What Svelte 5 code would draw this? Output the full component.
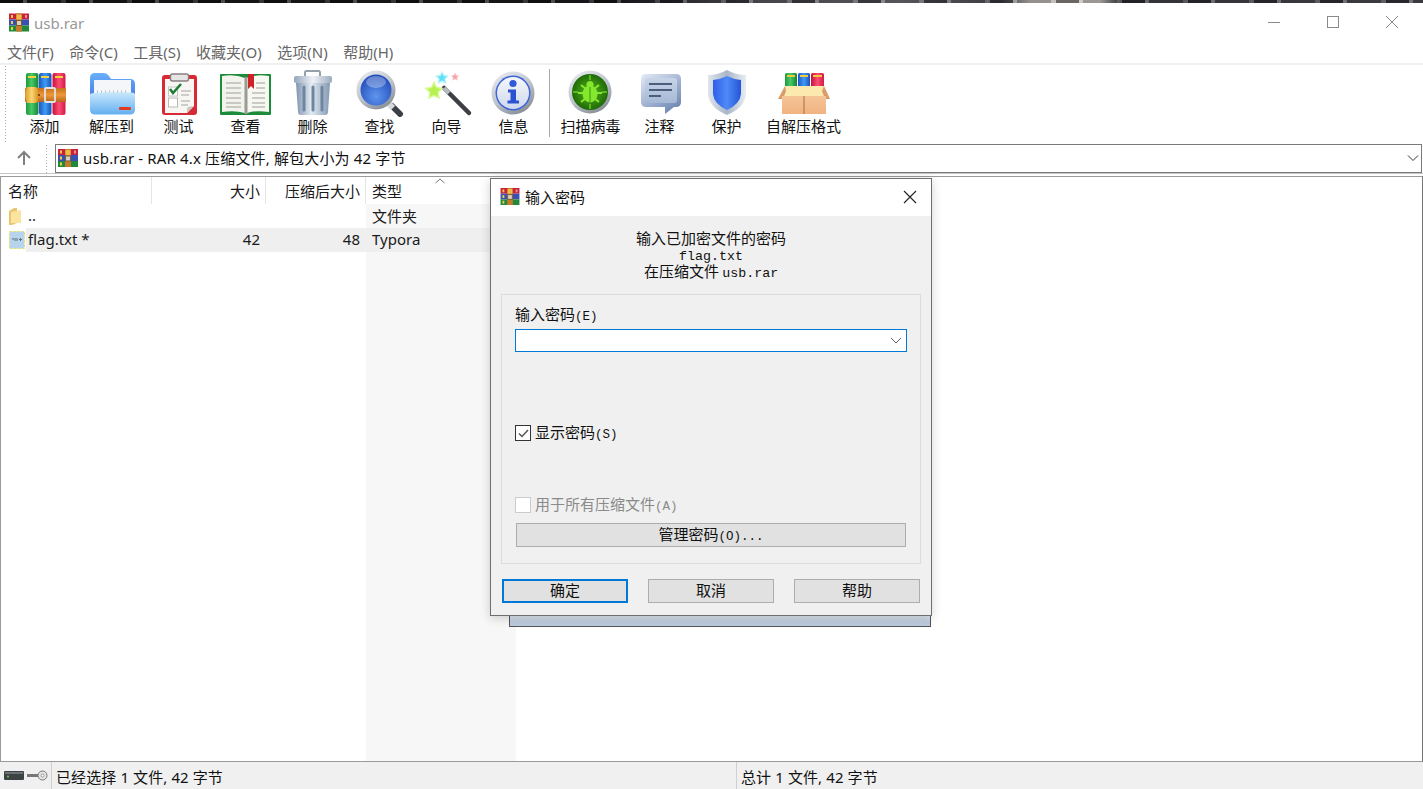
<script>
  const tools = [
    { label: '添加', width: 67, icon: 'add' },
    { label: '解压到', width: 67, icon: 'extract' },
    { label: '测试', width: 67, icon: 'test' },
    { label: '查看', width: 67, icon: 'view' },
    { label: '删除', width: 67, icon: 'delete' },
    { label: '查找', width: 67, icon: 'find' },
    { label: '向导', width: 67, icon: 'wizard' },
    { label: '信息', width: 67, icon: 'info' },
    { sep: true },
    { label: '扫描病毒', width: 71, icon: 'scan' },
    { label: '注释', width: 67, icon: 'comment' },
    { label: '保护', width: 67, icon: 'protect' },
    { label: '自解压格式', width: 87, icon: 'sfx' }
  ];

  const menus = ['文件(F)', '命令(C)', '工具(S)', '收藏夹(O)', '选项(N)', '帮助(H)'];

  const star = (cx, cy, r) => {
    const pts = [];
    for (let i = 0; i < 10; i++) {
      const a = -Math.PI / 2 + (i * Math.PI) / 5;
      const d = i % 2 ? r * 0.5 : r;
      pts.push(`${(cx + d * Math.cos(a)).toFixed(1)},${(cy + d * Math.sin(a)).toFixed(1)}`);
    }
    return pts.join(' ');
  };
</script>

{#snippet rar(w, h)}
  <svg class="rar" width={w} height={h} viewBox="0 0 20 18">
    <rect y="0" width="20" height="6" fill="#c8213c" />
    <rect y="6" width="20" height="6" fill="#3a4fb5" />
    <rect y="12" width="20" height="6" fill="#21893a" />
    <rect x="2" y="1.5" width="2" height="3" fill="#f3c93f" />
    <rect x="2" y="7.5" width="2" height="3" fill="#e9d24a" />
    <rect x="2" y="13.5" width="2" height="3" fill="#e9d24a" />
    <rect x="16" y="1.5" width="2" height="3" fill="#f08a9a" />
    <rect x="7" y="0" width="6" height="18" fill="#c47b2c" />
    <rect x="7.5" y="1" width="5" height="5" rx="1" fill="#f0b94a" />
    <rect x="7.5" y="7" width="5" height="5" fill="#d9d0c0" stroke="#7b5a2a" stroke-width="1" />
  </svg>
{/snippet}

{#snippet toolIcon(name)}
  <svg width="56" height="48" viewBox="0 0 56 48">
    {#if name === 'add'}
      <rect x="9" y="4" width="12.5" height="42" rx="2" fill="url(#bookG)" />
      <rect x="22" y="4" width="12.5" height="42" rx="2" fill="url(#bookB)" />
      <rect x="35.5" y="4" width="13" height="42" rx="2" fill="url(#bookR)" />
      <rect x="11" y="7" width="8" height="2" fill="#f4d23c" />
      <rect x="24" y="7" width="8" height="2" fill="#f4d23c" />
      <rect x="38" y="7" width="8" height="2" fill="#f4d23c" />
      <rect x="8" y="19" width="41" height="14" rx="1" fill="url(#belt)" />
      <path d="M10 18h8q3 0 3 3v10q0 3-3 3h-8q-3-8 0-16z" fill="url(#gold)" />
      <circle cx="22" cy="26" r="1" fill="#5b3210" />
      <rect x="28" y="19" width="10" height="14" rx="1" fill="none" stroke="#dfe3e6" stroke-width="1.800" />
    {:else if name === 'extract'}
      <path d="M6 9q0-5 5-5h9q3 0 5 3l2 3h19q5 0 5 5v26H6z" fill="url(#folderBack)" />
      <rect x="10" y="11" width="37" height="16" fill="#f4f6f9" />
      <path d="M13 23h31" stroke="#b5bdc8" stroke-width="3" stroke-dasharray="1 3" />
      <path d="M6 26q0-2 4-2 6 0 10-.5 6-.5 10 0h17q4 0 4 2v15q0 5-5 5H11q-5 0-5-5z" fill="url(#folderFront)" />
      <rect x="35" y="38" width="12" height="3" rx="1" fill="#e23b24" />
    {:else if name === 'test'}
      <rect x="11" y="6" width="35" height="40" rx="3" fill="#d72a35" />
      <path d="M14 10h29v27l-7 7H14z" fill="#f7f6f2" />
      <path d="M43 37l-7 7q0-6 1-6z" fill="#c9c5bc" />
      <rect x="19.5" y="5" width="18" height="7" rx="2" fill="#e5e5e5" stroke="#8a7f80" stroke-width="1.4" />
      <rect x="17.5" y="18" width="9" height="9" fill="#fff" stroke="#c4c4c4" />
      <rect x="17.5" y="29" width="9" height="9" fill="#fff" stroke="#b9b9b9" />
      <path d="M19 20l3 4 8-9" fill="none" stroke="#1f7d34" stroke-width="2.6" />
      <path d="M30 22h10M30 26h8M30 32h9M30 36h7" stroke="#a3a3a3" stroke-width="1.2" />
    {:else if name === 'view'}
      <rect x="2" y="5" width="51" height="41" rx="1" fill="#1c8c3a" />
      <path d="M4 7q13-2 23 2v35Q17 41 4 43z" fill="#f3f3ee" />
      <path d="M51 7q-13-2-22 2v35q9-3 22-1z" fill="#f8f8f3" />
      <rect x="26.5" y="8" width="3" height="37" fill="#9b9b94" />
      <path d="M8 14h15M8 19h15M8 24h15M8 29h15M8 34h15M8 38h15M34 24h13M34 29h13M34 34h13M34 38h13M38 14h9M38 19h9" stroke="#bcbcb4" stroke-width="1.5" />
      <path d="M30 5h6v15l-3-3-3 3z" fill="#cf2128" />
    {:else if name === 'delete'}
      <rect x="20" y="2" width="15" height="7" rx="1.5" fill="none" stroke="#94a1ad" stroke-width="2" />
      <path d="M11 14h34l-2 29q0 3-3 3H16q-3 0-3-3z" fill="url(#can)" />
      <rect x="9" y="7" width="38" height="7" rx="2" fill="url(#lid)" />
      <path d="M19 18v23M28 18v23M37 18v23" stroke="#6f86a1" stroke-width="3" stroke-linecap="round" />
    {:else if name === 'find'}
      <path d="M40 37l8 8" stroke="#3a4048" stroke-width="6" stroke-linecap="round" />
      <path d="M37 35l4 4" stroke="#d5d9dd" stroke-width="6" />
      <circle cx="24" cy="21" r="19.5" fill="url(#silver)" />
      <circle cx="24" cy="21" r="15.5" fill="url(#glass)" />
      <ellipse cx="24" cy="13" rx="10" ry="6" fill="#fff" opacity="0.3" />
    {:else if name === 'wizard'}
      <path d="M25 19l25 25" stroke="#3c3f44" stroke-width="4.5" stroke-linecap="round" />
      <path d="M25 19l5 5" stroke="#b7bbc1" stroke-width="4.5" />
      <polygon points={star(15, 22, 8.5)} fill="#b6f04a" stroke="#d5f88f" stroke-width="1.5" />
      <polygon points={star(23, 9, 6)} fill="#5fe0f5" stroke="#b2f2fb" stroke-width="1.2" />
      <polygon points={star(36, 8, 4)} fill="#f7a5ad" stroke="#fbd0d4" stroke-width="0.6" />
    {:else if name === 'info'}
      <circle cx="27" cy="24" r="21.5" fill="url(#silver)" />
      <circle cx="27" cy="24" r="17.5" fill="#3f63d8" />
      <circle cx="27" cy="24" r="16" fill="url(#infoFace)" />
      <circle cx="27" cy="14.5" r="3.6" fill="#2f59d8" />
      <path d="M22 20.5h8v11h3v3H21.5v-3h3v-8h-2.5z" fill="#2a52d2" />
    {:else if name === 'scan'}
      <circle cx="27" cy="23" r="21.5" fill="url(#silver)" />
      <circle cx="27" cy="23" r="18" fill="url(#scanFace)" />
      <path d="M27 6v5M27 35v5M10 23h5M39 23h5" stroke="#6fcf2a" stroke-width="1.4" />
      <g fill="none" stroke="#84e82e" stroke-width="2">
        <path d="M18 16l5 4M36 16l-5 4M15 24h6M39 24h-6M18 33l5-4M36 33l-5-4" />
      </g>
      <circle cx="27" cy="15.5" r="3.5" fill="#84e82e" />
      <ellipse cx="27" cy="25" rx="7.5" ry="8.5" fill="#84e82e" />
      <path d="M27 18v15" stroke="#3d9410" stroke-width="1" />
    {:else if name === 'comment'}
      <path d="M14 5h30q5 0 5 5v23q0 5-5 5h-2l-9 7v-7H14q-5 0-5-5V10q0-5 5-5z" fill="url(#bubble)" />
      <path d="M17 9h25q3 0 3 3v19q0 3-3 3H19q-5-2-6-8V12q0-3 4-3z" fill="url(#bubbleIn)" />
      <path d="M17 15h23M17 21h23M17 27h12" stroke="#4c5f7a" stroke-width="1.8" />
    {:else if name === 'protect'}
      <path d="M28 1q9 5 19 5v20q-2 13-19 20Q11 39 9 26V6q10 0 19-5z" fill="url(#shieldOut)" />
      <path d="M28 7q7 3.500 14 4v14q-1 10-14 16Q15 35 14 25V11q7-.5 14-4z" fill="url(#shieldIn)" />
    {:else if name === 'sfx'}
      <rect x="9" y="4" width="12" height="17" rx="1.500" fill="url(#bookG)" />
      <rect x="22" y="4" width="12" height="17" rx="1.500" fill="url(#bookB)" />
      <rect x="35" y="4" width="13" height="17" rx="1.500" fill="url(#bookR)" />
      <path d="M11 7h8M24 7h8M37 7h9" stroke="#f2c93a" stroke-width="2" />
      <path d="M9 17h39l6 13H2z" fill="#fbe9ae" />
      <path d="M9 17L2 30h5l3-8zM48 17l6 13h-5l-3-8z" fill="#d99c6c" />
      <rect x="6" y="27" width="44" height="18" fill="url(#box)" />
      <path d="M28 27v18" stroke="#a66f43" />
    {/if}
  </svg>
{/snippet}

<svg class="defs" width="0" height="0" aria-hidden="true">
  <defs>
    <linearGradient id="bookG"><stop offset="0" stop-color="#1c9a3f" /><stop offset="0.45" stop-color="#48c966" /><stop offset="1" stop-color="#158238" /></linearGradient>
    <linearGradient id="bookB"><stop offset="0" stop-color="#1d56c9" /><stop offset="0.5" stop-color="#3f9cf2" /><stop offset="1" stop-color="#1b4fb9" /></linearGradient>
    <linearGradient id="bookR"><stop offset="0" stop-color="#c60f3c" /><stop offset="0.5" stop-color="#fb4d72" /><stop offset="1" stop-color="#d31a4c" /></linearGradient>
    <linearGradient id="belt" x2="0" y2="1"><stop offset="0" stop-color="#c96f1e" /><stop offset="0.5" stop-color="#ed9a3a" /><stop offset="1" stop-color="#b9641a" /></linearGradient>
    <linearGradient id="gold"><stop offset="0" stop-color="#e2a32c" /><stop offset="0.5" stop-color="#f8d674" /><stop offset="1" stop-color="#dd9526" /></linearGradient>
    <linearGradient id="folderBack" x2="0" y2="1"><stop offset="0" stop-color="#6ab0fb" /><stop offset="1" stop-color="#2f62dc" /></linearGradient>
    <linearGradient id="folderFront" x2="0" y2="1"><stop offset="0" stop-color="#c9e8fc" /><stop offset="1" stop-color="#62aff0" /></linearGradient>
    <linearGradient id="can"><stop offset="0" stop-color="#7f95b0" /><stop offset="0.45" stop-color="#e3eaf2" /><stop offset="1" stop-color="#8399b3" /></linearGradient>
    <linearGradient id="lid"><stop offset="0" stop-color="#93a6bc" /><stop offset="0.5" stop-color="#eef2f6" /><stop offset="1" stop-color="#9aacc0" /></linearGradient>
    <linearGradient id="silver" x2="0.6" y2="1"><stop offset="0" stop-color="#eef0f3" /><stop offset="0.6" stop-color="#bcc3cc" /><stop offset="1" stop-color="#8c929a" /></linearGradient>
    <radialGradient id="glass" cy="0.7" r="0.7"><stop offset="0" stop-color="#5f96ee" /><stop offset="1" stop-color="#1f48b8" /></radialGradient>
    <linearGradient id="infoFace" x2="0" y2="1"><stop offset="0" stop-color="#f5f7fb" /><stop offset="1" stop-color="#cfd9ec" /></linearGradient>
    <radialGradient id="scanFace"><stop offset="0" stop-color="#58b91b" /><stop offset="1" stop-color="#1f6a08" /></radialGradient>
    <linearGradient id="bubble" x2="0.7" y2="1"><stop offset="0" stop-color="#e4ebf6" /><stop offset="1" stop-color="#6f88b4" /></linearGradient>
    <linearGradient id="bubbleIn" x2="0" y2="1"><stop offset="0" stop-color="#c8d5e8" /><stop offset="1" stop-color="#a5b8d5" /></linearGradient>
    <linearGradient id="shieldOut"><stop offset="0" stop-color="#dfe5ec" /><stop offset="0.5" stop-color="#a9b6c8" /><stop offset="1" stop-color="#e8edf2" /></linearGradient>
    <linearGradient id="shieldIn"><stop offset="0" stop-color="#2f5fe8" /><stop offset="0.5" stop-color="#4f8af8" /><stop offset="1" stop-color="#2554d8" /></linearGradient>
    <linearGradient id="box" x2="0" y2="1"><stop offset="0" stop-color="#f6c596" /><stop offset="1" stop-color="#f0b281" /></linearGradient>
  </defs>
</svg>

<div class="app">
  <div class="wallpaper"></div>

  <div class="titlebar">
    {@render rar(20, 19)}
    <span class="title">usb.rar</span>
    <div class="controls">
      <span class="ctl"><svg width="14" height="14" viewBox="0 0 14 14"><path d="M1 7.5h12" stroke="#8a8a8a" /></svg></span>
      <span class="ctl"><svg width="14" height="14" viewBox="0 0 14 14"><rect x="1.500" y="1.500" width="11" height="11" fill="none" stroke="#8a8a8a" /></svg></span>
      <span class="ctl"><svg width="14" height="14" viewBox="0 0 14 14"><path d="M1 1l12 12M13 1L1 13" stroke="#8a8a8a" /></svg></span>
    </div>
  </div>

  <nav class="menu">
    {#each menus as m}
      <span>{m}</span>
    {/each}
  </nav>

  <div class="toolbar">
    {#each tools as t}
      {#if t.sep}
        <div class="tool-sep"></div>
      {:else}
        <div class="tool" style="width: {t.width}px">
          {@render toolIcon(t.icon)}
          <span>{t.label}</span>
        </div>
      {/if}
    {/each}
  </div>

  <div class="addressbar">
    <div class="up">
      <svg width="16" height="16" viewBox="0 0 16 16"><path d="M8 15V2M2 8l6-6 6 6" fill="none" stroke="#808080" stroke-width="2" /></svg>
    </div>
    <div class="address">
      {@render rar(20, 18)}
      <span>usb.rar - RAR 4.x 压缩文件, 解包大小为 42 字节</span>
      <svg class="chev" width="12" height="8" viewBox="0 0 12 8"><path d="M1 1.500l5 5 5-5" fill="none" stroke="#333" /></svg>
    </div>
  </div>

  <div class="list">
    <div class="sortcol"></div>
    <div class="row head">
      <div class="c name">名称</div>
      <div class="c num">大小</div>
      <div class="c num">压缩后大小</div>
      <div class="c type">
        类型
        <svg class="sort" width="10" height="6" viewBox="0 0 10 6"><path d="M.5 5L5 1l4.500 4" fill="none" stroke="#777" /></svg>
      </div>
    </div>
    <div class="row">
      <div class="c name">
        <svg width="14" height="17" viewBox="0 0 14 17"><path d="M0 3l5-3h3v15l-5 2H0z" fill="#e9c56e" /><path d="M2 4l10-2v13H2z" fill="#fbe3a0" /></svg>
        <span>..</span>
      </div>
      <div class="c num"></div>
      <div class="c num"></div>
      <div class="c type">文件夹</div>
    </div>
    <div class="row selected">
      <div class="c name">
        <svg class="fileicon" width="16" height="18" viewBox="0 0 16 18">
          <rect x="0.500" y="0.500" width="15" height="17" fill="#b8d3ec" stroke="#d8e84a" stroke-dasharray="2 2" />
          <path d="M3 8h2M6 7v3M8 7v3M10 8.500h3M11.500 7v3" stroke="#5f6f80" />
        </svg>
        <span class="fname">flag.txt *</span>
      </div>
      <div class="c num">42</div>
      <div class="c num">48</div>
      <div class="c type">Typora</div>
    </div>
  </div>

  <div class="statusbar">
    <div class="st-icons">
      <svg width="20" height="9" viewBox="0 0 20 9"><rect width="20" height="9" rx="1" fill="#3d4245" /><rect x="1" y="1" width="18" height="2" fill="#6c7275" /><circle cx="4" cy="5.500" r="1" fill="#6fc24a" /></svg>
      <svg width="21" height="11" viewBox="0 0 21 11"><path d="M0 4h11v3H0z" fill="#777" /><circle cx="15.500" cy="5.500" r="4.500" fill="#e4e4e4" stroke="#777" /><circle cx="15.500" cy="5.500" r="1.500" fill="#fff" stroke="#999" /></svg>
    </div>
    <div class="st-left">已经选择 1 文件, 42 字节</div>
    <div class="st-right">总计 1 文件, 42 字节</div>
  </div>

  <div class="behind"></div>

  <div class="dialog">
    <div class="d-title">
      {@render rar(20, 17)}
      <span>输入密码</span>
      <svg class="d-close" width="14" height="14" viewBox="0 0 14 14"><path d="M1 1l12 12M13 1L1 13" stroke="#222" stroke-width="1.100" /></svg>
    </div>
    <div class="d-body">
      <div class="d-msg">
        <div class="m1">输入已加密文件的密码</div>
        <div class="m2">flag.txt</div>
        <div class="m3">在压缩文件 <span class="lat">usb.rar</span></div>
      </div>
      <div class="group">
        <div class="g-label">输入密码<span class="lat">(E)</span></div>
        <div class="combo">
          <svg width="12" height="7" viewBox="0 0 12 7"><path d="M1 1l5 5 5-5" fill="none" stroke="#666" /></svg>
        </div>
        <div class="check show">
          <span class="box">
            <svg width="15" height="15" viewBox="0 0 15 15"><path d="M3 7.500l3 3 6-6.500" fill="none" stroke="#555" stroke-width="1.500" /></svg>
          </span>
          <span class="check-text">显示密码<span class="lat">(S)</span></span>
        </div>
        <div class="check all disabled">
          <span class="box"></span>
          <span class="check-text">用于所有压缩文件<span class="lat">(A)</span></span>
        </div>
        <div class="btn manage"><span>管理密码<span class="lat">(O)...</span></span></div>
      </div>
      <div class="actions">
        <div class="btn primary">确定</div>
        <div class="btn">取消</div>
        <div class="btn">帮助</div>
      </div>
    </div>
  </div>
</div>

<style>
  :global(body) {
    margin: 0;
    overflow: hidden;
    background: #fff;
  }

  .defs {
    position: absolute;
  }

  .app {
    position: relative;
    display: flex;
    flex-direction: column;
    height: 789px;
    overflow: hidden;
    background: #fff;
    font-family: "Noto Sans", "Noto Sans CJK SC", sans-serif;
    font-size: 15px;
    color: #1a1a1a;
  }

  .app :global(svg) {
    display: block;
    flex: none;
  }

  .wallpaper {
    height: 3px;
    background:
      repeating-linear-gradient(90deg, rgba(0, 0, 0, 0.45) 0 23px, rgba(255, 255, 255, 0.22) 23px 27px, rgba(0, 0, 0, 0.2) 27px 61px, rgba(255, 255, 255, 0.12) 61px 66px),
      linear-gradient(90deg, #18181b 0, #1c1c20 620px, #55555c 760px, #6a6a70 900px, #4c4c52 1000px, #b8b4b0 1030px, #c4beb8 1100px, #3d3e44 1120px, #4a4a50 1423px);
  }

  .titlebar {
    display: flex;
    align-items: center;
    height: 39px;
    padding-left: 9px;
  }

  .title {
    margin-left: 5px;
    color: #999;
  }

  .controls {
    display: flex;
    margin-left: auto;
    margin-right: 2px;
    margin-top: -2px;
  }

  .ctl {
    display: flex;
    justify-content: center;
    align-items: center;
    width: 59px;
    height: 24px;
  }

  .menu {
    display: flex;
    gap: 15.500px;
    align-items: center;
    height: 21px;
    padding-left: 7px;
    color: #666;
  }

  .menu span {
    position: relative;
    top: -1px;
    white-space: nowrap;
  }

  .toolbar {
    display: flex;
    height: 81px;
    box-sizing: border-box;
    padding: 4px 0 0 11px;
    border-top: 2px solid #f0f0f0;
    background: radial-gradient(circle, #b0b0b0 0.8px, transparent 1px) 4px 0 / 3px 3px repeat-y;
  }

  .tool {
    display: flex;
    flex-direction: column;
    align-items: center;
    flex: none;
    color: #111;
  }

  .tool span {
    margin-top: -1px;
    line-height: 20px;
    white-space: nowrap;
  }

  .tool-sep {
    width: 1px;
    height: 68px;
    margin: 0 5px 0 2px;
    background: #a8a8a8;
  }

  .addressbar {
    display: flex;
    height: 29px;
  }

  .up {
    display: flex;
    justify-content: center;
    align-items: center;
    width: 48px;
    box-sizing: border-box;
    padding-bottom: 2px;
    background: radial-gradient(circle, #b0b0b0 0.8px, transparent 1px) right 0 top 0 / 3px 3px repeat-y;
  }

  .address {
    display: flex;
    align-items: center;
    flex: 1;
    gap: 5px;
    margin: 0 1px 0 7px;
    padding: 0 0 1px 2px;
    border: 1px solid #7a7a7a;
    color: #111;
  }

  .address span {
    padding-bottom: 2px;
    letter-spacing: 0.15px;
  }

  .chev {
    margin-left: auto;
    margin-right: 2px;
  }

  .list {
    position: relative;
    flex: 1;
    margin-top: 3px;
    border: 1px solid #9a9a9a;
    border-right-color: #777;
    box-shadow: 0 -2px 0 #fff, 0 -3px 0 #c4c4c4;
  }

  .sortcol {
    position: absolute;
    left: 365px;
    top: 27px;
    bottom: 0;
    width: 150px;
    background: #f7f7f7;
  }

  .row {
    position: relative;
    display: grid;
    grid-template-columns: 150px 114px 100px 150px;
    height: 24px;
    align-items: center;
  }

  .row.head {
    height: 27px;
  }

  .row.head .c {
    height: 27px;
    line-height: 29px;
    box-shadow: 1px 0 0 #e5e5e5;
  }

  .row.head .name {
    padding-top: 2px;
  }

  .row.head .c.type {
    box-shadow: none;
  }

  .c {
    box-sizing: border-box;
    white-space: nowrap;
  }

  .name {
    display: flex;
    align-items: center;
    gap: 5px;
    padding-left: 7px;
    height: 24px;
  }

  .row:not(.head) .name {
    padding-left: 8px;
    gap: 5px;
  }

  .row:not(.head) .num,
  .row:not(.head) .type,
  .row:not(.head) .name span {
    padding-bottom: 2px;
  }

  .num {
    text-align: right;
    padding-right: 5px;
  }

  .type {
    position: relative;
    padding-left: 7px;
  }

  .sort {
    position: absolute;
    left: 70px;
    top: 1px;
  }

  .selected::before {
    content: "";
    position: absolute;
    left: 25px;
    width: 490px;
    top: 0;
    bottom: 0;
    background: #efefef;
  }

  .selected .c {
    position: relative;
  }

  .row.selected .name {
    gap: 3px;
  }

  .statusbar {
    display: flex;
    align-items: center;
    height: 27px;
    background: #f0f0f0;
    color: #111;
    letter-spacing: 0.1px;
  }

  .st-icons {
    display: flex;
    align-items: center;
    gap: 3px;
    box-sizing: border-box;
    width: 52px;
    height: 100%;
    padding-left: 4px;
    border-right: 1px solid #d0d0d0;
  }

  .st-left {
    width: 685px;
    height: 100%;
    line-height: 31px;
    padding-left: 4px;
    box-sizing: border-box;
    border-right: 1px solid #d0d0d0;
  }

  .st-right {
    height: 100%;
    line-height: 31px;
    padding-left: 4px;
  }

  .behind {
    position: absolute;
    left: 509px;
    top: 600px;
    width: 420px;
    height: 26px;
    border: 1px solid #555;
    border-top: none;
    background: linear-gradient(#dfe7f0 60%, #bccbdd 85%);
  }

  .dialog {
    position: absolute;
    left: 490px;
    top: 178px;
    width: 442px;
    height: 438px;
    box-sizing: border-box;
    display: flex;
    flex-direction: column;
    border: 1px solid #6e6e6e;
    background: #f0f0f0;
    box-shadow: 0 2px 10px rgba(0, 0, 0, 0.18);
  }

  .d-title {
    display: flex;
    align-items: center;
    gap: 5px;
    height: 37px;
    flex: none;
    padding-left: 9px;
    padding-bottom: 2px;
    box-sizing: border-box;
    background: #fff;
    color: #111;
  }

  .d-close {
    margin-left: auto;
    margin-right: 14px;
  }

  .d-body {
    flex: 1;
    padding: 0 10px;
    font-family: "Noto Sans CJK SC", sans-serif;
    color: #111;
  }

  .lat {
    font-family: "Liberation Mono", monospace;
    font-size: 12.500px;
  }

  .d-msg {
    display: flex;
    flex-direction: column;
    text-align: center;
    height: 78px;
    padding-top: 13px;
    box-sizing: border-box;
  }

  .d-msg .lat {
    font-size: 13.300px;
  }

  .m1,
  .m2,
  .m3 {
    flex: none;
    line-height: 17px;
  }

  .m1 {
    height: 20px;
  }

  .m2 {
    height: 13px;
    line-height: 16px;
    font-family: "Liberation Mono", monospace;
    font-size: 13.300px;
  }

  .m3 {
    height: 17px;
  }

  .group {
    box-sizing: border-box;
    height: 270px;
    padding: 10px 13px 0 13px;
    border: 1px solid #dcdcdc;
  }

  .g-label {
    height: 24px;
    line-height: 18px;
  }

  .combo {
    display: flex;
    justify-content: flex-end;
    align-items: center;
    box-sizing: border-box;
    height: 23px;
    padding-right: 4px;
    background: #fff;
    border: 1px solid #0078d7;
  }

  .check {
    display: flex;
    align-items: center;
    gap: 4px;
    height: 16px;
  }

  .check-text {
    padding-bottom: 3px;
  }

  .check.show {
    margin-top: 73px;
  }

  .check.all {
    margin-top: 56px;
  }

  .check.disabled {
    color: #8a8a8a;
  }

  .box {
    box-sizing: border-box;
    width: 16px;
    height: 16px;
    background: #fff;
    border: 1px solid #333;
  }

  .disabled .box {
    border-color: #ccc;
  }

  .btn {
    display: flex;
    justify-content: center;
    align-items: center;
    box-sizing: border-box;
    height: 24px;
    padding-bottom: 3px;
    background: #e1e1e1;
    border: 1px solid #adadad;
  }

  .manage {
    margin: 10px 1px 0 1px;
  }

  .actions {
    display: grid;
    grid-template-columns: repeat(3, 126px);
    gap: 20px;
    margin-top: 15px;
    margin-left: 1px;
  }

  .primary {
    border: 2px solid #0078d7;
  }
</style>
